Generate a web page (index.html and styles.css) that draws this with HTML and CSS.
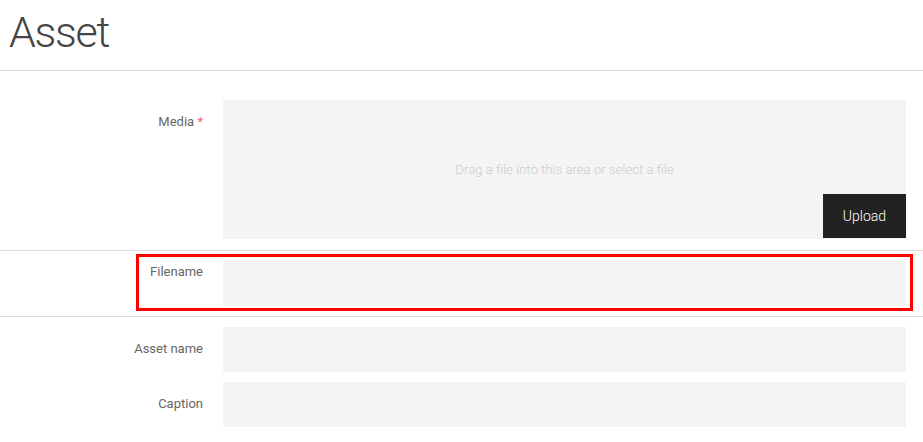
FILE: index.html
```html
<!DOCTYPE html>
<html lang="en">
<head>
<meta charset="utf-8">
<title>Asset</title>
<link rel="stylesheet" href="styles.css">
</head>
<body>
<header class="page-header">
  <h1 class="page-title">Asset</h1>
</header>
<main class="form">
  <div class="field field-media">
    <label class="field-label label-top">Media <span class="required">*</span></label>
    <div class="dropzone">
      <span class="dropzone-text">Drag a file into this area or select a file</span>
      <button class="upload-btn" type="button">Upload</button>
    </div>
  </div>
  <section class="field-section">
    <div class="field">
      <label class="field-label label-tight">Filename</label>
      <div class="input"></div>
    </div>
    <div class="highlight"></div>
  </section>
  <div class="field-group">
    <div class="field">
      <label class="field-label label-top">Asset name</label>
      <div class="input"></div>
    </div>
    <div class="field">
      <label class="field-label label-top">Caption</label>
      <div class="input"></div>
    </div>
  </div>
</main>
</body>
</html>
```
FILE: styles.css
```css
* { box-sizing: border-box; }
html, body { margin: 0; padding: 0; background: #fff; }
body {
  font-family: Roboto, "Liberation Sans", Arial, sans-serif;
  color: #555;
  width: 923px;
  overflow: hidden;
}
.page-header {
  height: 71px;
  border-bottom: 1px solid #dcdcdc;
  padding: 7px 0 0 9px;
}
.page-title {
  margin: 0;
  font-size: 43px;
  font-weight: 300;
  line-height: normal;
  color: #444;
  letter-spacing: -1.3px;
}
.form {
  padding-top: 29px;
}
.field {
  display: grid;
  grid-template-columns: 223px 683px;
}
.field-label {
  font-size: 13px;
  line-height: 16px;
  text-align: right;
  padding-right: 20px;
  color: #666;
}
.label-top { padding-top: 14px; }
.label-tight { padding-top: 3px; }
.required { color: #ee6a6a; }
.dropzone {
  display: grid;
  height: 139px;
  background: #f4f4f4;
}
.dropzone-text {
  grid-area: 1 / 1;
  place-self: center;
  font-size: 13.2px;
  font-weight: 300;
  color: #cdcdcd;
}
.upload-btn {
  grid-area: 1 / 1;
  place-self: end;
  width: 83px;
  height: 44px;
  border: 0;
  border-radius: 0;
  background: #222;
  color: #fff;
  font-family: Roboto, "Liberation Sans", Arial, sans-serif;
  font-size: 14px;
  font-weight: 300;
  padding: 0;
  margin-bottom: 1px;
}
.field-section {
  position: relative;
  margin-top: 11px;
  border-top: 1px solid #dcdcdc;
  border-bottom: 1px solid #dcdcdc;
  padding: 10px 0;
}
.input {
  height: 45px;
  background: #f4f4f4;
}
.highlight {
  position: absolute;
  left: 136px;
  top: 3px;
  width: 777px;
  height: 57px;
  border: 3px solid #f00;
}
.field-group {
  display: flex;
  flex-direction: column;
  gap: 10px;
  padding-top: 10px;
}
```
